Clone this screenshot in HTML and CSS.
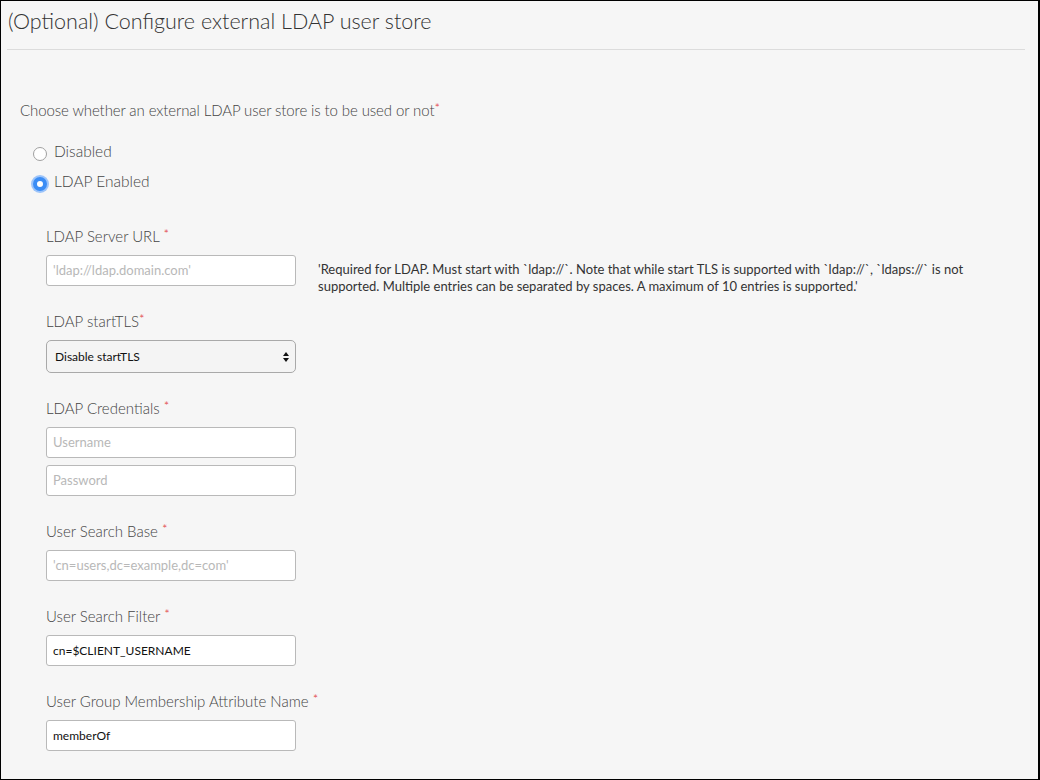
FILE: index.html
```html
<!DOCTYPE html>
<html>
<head>
<meta charset="utf-8">
<link rel="stylesheet" href="styles.css">
</head>
<body>
<div class="page">
  <h1 class="title">(Optional) Configure external LDAP user store</h1>
  <hr class="rule">
  <div class="form">
    <p class="question">Choose whether an external LDAP user store is to be used or not<span class="req">*</span></p>
    <div class="radios">
      <label class="radio"><span class="dot"></span><span>Disabled</span></label>
      <label class="radio"><span class="dot on"></span><span>LDAP Enabled</span></label>
    </div>
    <div class="fields">
      <div class="field">
        <div class="label">LDAP Server URL <span class="req">*</span></div>
        <div class="row">
          <div class="input ph">'ldap://ldap.domain.com'</div>
          <p class="help">'Required for LDAP. Must start with `ldap://`. Note that while start TLS is supported with `ldap://`, `ldaps://` is not supported. Multiple entries can be separated by spaces. A maximum of 10 entries is supported.'</p>
        </div>
      </div>
      <div class="field">
        <div class="label">LDAP startTLS<span class="req">*</span></div>
        <div class="select"><span>Disable startTLS</span>
          <svg class="arrows" width="6" height="10" viewBox="0 0 6 10"><path d="M3 0 L6 4 L0 4 Z M3 10 L6 6 L0 6 Z" fill="#111"/></svg>
        </div>
      </div>
      <div class="field">
        <div class="label">LDAP Credentials <span class="req">*</span></div>
        <div class="stack">
          <div class="input ph">Username</div>
          <div class="input ph">Password</div>
        </div>
      </div>
      <div class="field">
        <div class="label">User Search Base <span class="req">*</span></div>
        <div class="input ph">'cn=users,dc=example,dc=com'</div>
      </div>
      <div class="field">
        <div class="label">User Search Filter <span class="req">*</span></div>
        <div class="input">cn=$CLIENT_USERNAME</div>
      </div>
      <div class="field">
        <div class="label">User Group Membership Attribute Name <span class="req">*</span></div>
        <div class="input">memberOf</div>
      </div>
    </div>
  </div>
</div>
</body>
</html>
```
FILE: styles.css
```css
html, body { margin: 0; padding: 0; }
body {
  width: 1040px;
  height: 780px;
  overflow: hidden;
  font-family: "Lato", "Open Sans", sans-serif;
}
.page {
  box-sizing: border-box;
  width: 1040px;
  height: 780px;
  background: #f6f6f6;
  border: 1px solid #000;
  border-right-width: 2px;
  padding: 0 13px 0 6px;
}
.title {
  margin: 0;
  padding-top: 7px;
  height: 26px;
  line-height: 26px;
  font-size: 21.5px;
  font-weight: 300;
  color: #333;
  padding-left: 1px;
}
.rule {
  margin: 15px 0 0 0;
  border: 0;
  border-top: 1px solid #dcdcdc;
}
.form { padding-left: 13px; }
.question {
  margin: 50px 0 0 0;
  line-height: 20px;
  font-size: 15px;
  letter-spacing: -0.1px;
  font-weight: 300;
  color: #444;
}
.req { color: #e0282c; font-size: 13px; vertical-align: top; line-height: 16px; }
.radios {
  margin-top: 21px;
  display: flex;
  flex-direction: column;
  gap: 10px;
  padding-left: 13px;
}
.radio {
  display: flex;
  align-items: center;
  gap: 7px;
  height: 20px;
  font-size: 15.5px;
  font-weight: 300;
  color: #444;
}
.dot {
  box-sizing: border-box;
  width: 14px;
  height: 14px;
  border-radius: 50%;
  border: 1px solid #a0a0a0;
  background: #fff;
  margin-top: 6px;
}
.dot.on {
  border: 4.5px solid #3b8df5;
  background: #fff;
  box-shadow: 0 0 0 2px #9cc4fa;
}
.fields {
  margin-top: 35px;
  padding-left: 26px;
  display: flex;
  flex-direction: column;
  gap: 25px;
}
.field { display: flex; flex-direction: column; gap: 9px; }
.label {
  line-height: 20px;
  font-size: 15px;
  font-weight: 300;
  color: #444;
}
.row { display: flex; align-items: flex-start; gap: 22px; height: 31px; }
.input {
  box-sizing: border-box;
  width: 250px;
  height: 31px;
  flex: none;
  border: 1px solid #b9b9b9;
  border-radius: 3px;
  background: #fff;
  padding: 0 6px;
  font-size: 12px;
  line-height: 29px;
  color: #111;
}
.input.ph { color: #b8b8b8; font-size: 13px; }
.stack { display: flex; flex-direction: column; gap: 7px; }
.help {
  margin: 6px 0 0 0;
  font-size: 13px;
  line-height: 17px;
  color: #333;
  max-width: 665px;
}
.select {
  box-sizing: border-box;
  width: 250px;
  height: 33px;
  border: 1px solid #a9a9a9;
  border-radius: 5px;
  background: #f4f4f4;
  padding: 0 6px 0 8px;
  display: flex;
  align-items: center;
  justify-content: space-between;
  font-size: 12px;
  color: #111;
}
.arrows { margin-top: 1px; }
```
